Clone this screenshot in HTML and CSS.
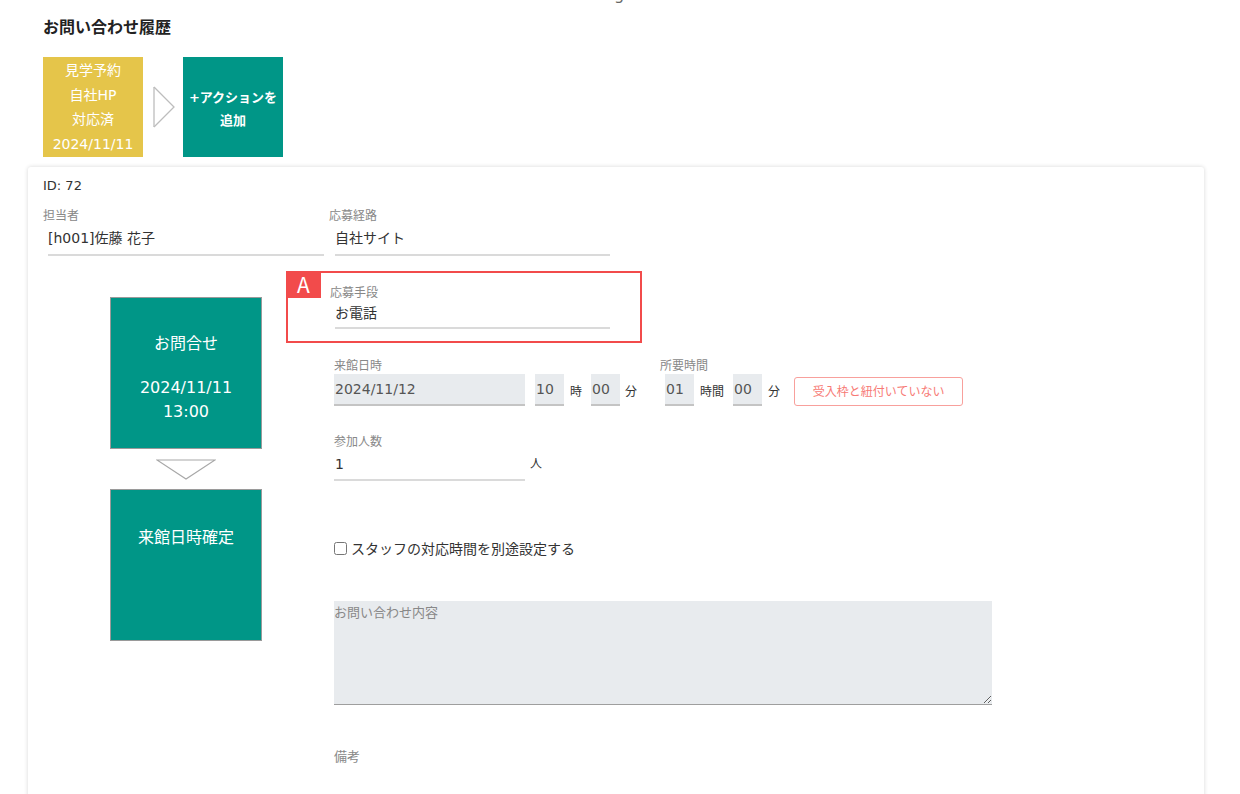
FILE: index.html
```html
<!DOCTYPE html>
<html lang="ja">
<head>
<meta charset="utf-8">
<title>お問い合わせ履歴</title>
<link rel="stylesheet" href="styles.css">
</head>
<body>
<div class="page">
  <div class="topcut">g</div>
  <h1 class="title">お問い合わせ履歴</h1>
  <div class="history">
    <div class="tile tile-yellow">
      <div>見学予約</div>
      <div>自社HP</div>
      <div>対応済</div>
      <div>2024/11/11</div>
    </div>
    <div class="h-arrow">
      <svg width="22" height="42" viewBox="0 0 22 42"><polyline points="1,1 21,21 1,41" fill="none" stroke="#bdbdbd" stroke-width="1.3"/><line x1="1" y1="1" x2="1" y2="41" stroke="#bdbdbd" stroke-width="1.3"/></svg>
    </div>
    <div class="tile tile-green">
      <div>+アクションを</div>
      <div>追加</div>
    </div>
  </div>

  <div class="card">
    <div class="id">ID: 72</div>
    <div class="row1">
      <div class="field f-tanto">
        <div class="label">担当者</div>
        <div class="value">[h001]佐藤 花子</div>
      </div>
      <div class="field f-keiro">
        <div class="label">応募経路</div>
        <div class="value">自社サイト</div>
      </div>
    </div>

    <div class="main">
      <div class="flow">
        <div class="flow-box">
          <div class="fb-line">お問合せ</div>
          <div class="fb-gap"></div>
          <div class="fb-line">2024/11/11</div>
          <div class="fb-line">13:00</div>
        </div>
        <div class="flow-arrow">
          <svg width="60" height="21" viewBox="0 0 60 21"><polygon points="1,1 59,1 30,20" fill="none" stroke="#a8a8a8" stroke-width="1.2"/></svg>
        </div>
        <div class="flow-box fb2">
          <div class="fb-line">来館日時確定</div>
        </div>
      </div>

      <div class="fields">
        <div class="annot-wrap">
          <div class="annot"><span class="annot-tag">A</span></div>
          <div class="field f-shudan">
            <div class="label">応募手段</div>
            <div class="value">お電話</div>
          </div>
        </div>

        <div class="dt-row">
          <div class="dt-group">
            <div class="label">来館日時</div>
            <div class="dt-inputs">
              <div class="box b-date">2024/11/12</div>
              <div class="box b-num b-hour">10</div>
              <span class="unit">時</span>
              <div class="box b-num">00</div>
              <span class="unit u-last">分</span>
            </div>
          </div>
          <div class="dt-group g2">
            <div class="label">所要時間</div>
            <div class="dt-inputs">
              <div class="box b-num">01</div>
              <span class="unit">時間</span>
              <div class="box b-num">00</div>
              <span class="unit">分</span>
              <div class="warn">受入枠と紐付いていない</div>
            </div>
          </div>
        </div>

        <div class="people">
          <div class="label">参加人数</div>
          <div class="people-row">
            <div class="value v-people">1</div>
            <span class="unit-person">人</span>
          </div>
        </div>

        <label class="check">
          <input type="checkbox">
          <span>スタッフの対応時間を別途設定する</span>
        </label>

        <div class="textarea">お問い合わせ内容</div>

        <div class="label bikou">備考</div>
      </div>
    </div>
  </div>
</div>
</body>
</html>
```

FILE: styles.css
```css
* { box-sizing: border-box; }
html, body { margin: 0; padding: 0; background: #fff; }
body {
  font-family: "DejaVu Sans", "Noto Sans CJK JP", sans-serif;
  color: #333;
  font-size: 14px;
  overflow: hidden;
}
.page {
  padding: 0 36px 0 28px;
  position: relative;
}
.topcut {
  position: absolute;
  left: 614px;
  top: -13px;
  font-size: 16px;
  line-height: 16px;
  color: #666;
}
.title {
  margin: 0 0 0 15px;
  padding-top: 16px;
  font-size: 16px;
  line-height: 20px;
  font-weight: bold;
  color: #222;
  font-family: "Noto Sans CJK JP", sans-serif;
}
.history {
  display: flex;
  margin: 21px 0 0 15px;
}
.tile {
  width: 100px;
  height: 100px;
  color: #fff;
  display: flex;
  flex-direction: column;
  align-items: center;
  justify-content: center;
  text-align: center;
}
.tile-yellow {
  background: #e5c54a;
  font-size: 14px;
  line-height: 24.5px;
}
.tile-green {
  background: #009687;
  font-size: 13px;
  line-height: 23px;
  font-weight: bold;
  padding-top: 3px;
}
.h-arrow {
  width: 40px;
  height: 100px;
  display: flex;
  align-items: center;
  justify-content: center;
  padding-left: 2px;
}

.card {
  margin-top: 10px;
  background: #fff;
  border-radius: 3px;
  box-shadow: 0 0 4px rgba(0,0,0,0.16);
  padding: 10px 15px 0 15px;
  min-height: 700px;
}
.id {
  font-size: 13px;
  line-height: 18px;
  color: #333;
}
.label {
  font-size: 12px;
  line-height: 16px;
  color: #888;
  font-family: "Noto Sans CJK JP", sans-serif;
}
.value {
  font-size: 14px;
  line-height: 22px;
  color: #333;
  padding-bottom: 5px;
  border-bottom: 2px solid #dadada;
}
.row1 {
  display: flex;
  gap: 5px;
  margin-top: 12px;
}
.field .label { margin-bottom: 4px; }
.f-tanto { width: 281px; }
.f-tanto .value { margin-left: 5px; }
.f-keiro .value { margin-left: 6px; width: 275px; }

.main {
  display: flex;
  margin-top: 15px;
}
.flow {
  width: 286px;
  padding-top: 26px;
  display: flex;
  flex-direction: column;
  align-items: center;
}
.flow-box {
  width: 152px;
  height: 152px;
  background: #009687;
  border: 1px solid #9a9a9a;
  color: #fff;
  text-align: center;
  font-size: 16px;
  line-height: 24px;
  padding-top: 34px;
}
.fb-gap { height: 20px; }
.fb2 { padding-top: 36px; }
.flow-arrow {
  height: 40px;
  display: flex;
  align-items: center;
  justify-content: center;
}

.fields {
  flex: 1;
  padding-left: 5px;
}
.annot-wrap {
  position: relative;
  height: 71px;
  padding-top: 13px;
}
.annot {
  position: absolute;
  left: -48px;
  top: 0;
  width: 356px;
  height: 72px;
  border: 2px solid #f24b4b;
}
.annot-tag {
  position: absolute;
  left: -2px;
  top: -2px;
  width: 35px;
  height: 27px;
  background: #f24b4b;
  color: #fff;
  font-size: 21px;
  line-height: 27px;
  text-align: center;
  font-family: "Noto Sans CJK JP", sans-serif;
}
.f-shudan { margin-left: -4px; }
.f-shudan .label { margin-bottom: 2px; }
.f-shudan .value { margin-left: 5px; width: 275px; padding-bottom: 3px; }

.dt-row {
  display: flex;
  margin-top: 15px;
}
.dt-group .label { margin-bottom: 1px; }
.dt-inputs {
  display: flex;
  align-items: center;
}
.box {
  height: 32px;
  background: #e8ebee;
  border-bottom: 2px solid #c4c4c4;
  font-size: 14px;
  line-height: 30px;
  color: #555;
  padding-left: 1px;
}
.b-date { width: 191px; }
.b-num { width: 29px; }
.b-hour { margin-left: 10px; }
.unit {
  font-size: 12px;
  color: #333;
  margin: 0 9px 0 6px;
  font-family: "Noto Sans CJK JP", sans-serif;
}
.u-last { margin: 0 28px 0 5px; }
.g2 .label { margin-left: -5px; }
.warn {
  margin-left: 5px;
  width: 169px;
  height: 29px;
  margin-top: 3px;
  border: 1.5px solid #f8a09c;
  border-radius: 3px;
  color: #f77a75;
  font-size: 12px;
  line-height: 26px;
  text-align: center;
  font-family: "Noto Sans CJK JP", sans-serif;
}

.people { margin-top: 27px; }
.people .label { margin-bottom: 4px; }
.people-row {
  display: flex;
  align-items: flex-end;
}
.v-people {
  width: 191px;
  padding-bottom: 4px;
  padding-left: 1px;
}
.unit-person {
  font-size: 12px;
  margin: 0 0 10px 5px;
  font-family: "Noto Sans CJK JP", sans-serif;
}

.check {
  display: flex;
  align-items: center;
  margin-top: 56px;
  height: 22px;
  font-size: 14px;
  color: #333;
  font-family: "Noto Sans CJK JP", sans-serif;
}
.check input {
  margin: 0 4px 0 0;
  width: 13px;
  height: 13px;
}

.textarea {
  margin-top: 42px;
  width: 658px;
  height: 104px;
  background: #e8ebee;
  border-bottom: 1px solid #9e9e9e;
  font-size: 13px;
  line-height: 22px;
  color: #888;
  font-family: "Noto Sans CJK JP", sans-serif;
  resize: both;
  overflow: auto;
}
.bikou {
  margin-top: 43px;
  font-size: 13px;
}
```
